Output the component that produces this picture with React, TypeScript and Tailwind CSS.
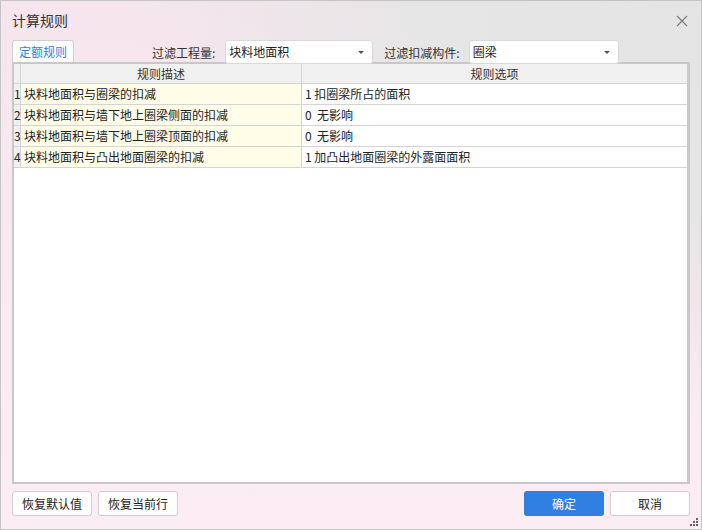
import React from 'react';

const rows = [
  { no: '1', desc: '块料地面积与圈梁的扣减', opt: '1 扣圈梁所占的面积' },
  { no: '2', desc: '块料地面积与墙下地上圈梁侧面的扣减', opt: '0  无影响' },
  { no: '3', desc: '块料地面积与墙下地上圈梁顶面的扣减', opt: '0  无影响' },
  { no: '4', desc: '块料地面积与凸出地面圈梁的扣减', opt: '1 加凸出地面圈梁的外露面面积' },
];

const Select = ({ value, width }: { value: string; width: string }) => (
  <div
    className={`relative z-10 flex h-[24px] items-center justify-between rounded-[3px] border border-[#d9d9d9] bg-white pl-[3px] pr-[8px] ${width}`}
  >
    <span>{value}</span>
    <span className="h-0 w-0 border-x-[3px] border-t-[3px] border-x-transparent border-t-[#555]" />
  </div>
);

const Button = ({ label, primary }: { label: string; primary?: boolean }) => (
  <button
    className={
      primary
        ? 'h-[25px] w-[80px] rounded-[3px] bg-[#2f80e0] text-white'
        : 'h-[25px] w-[80px] rounded-[3px] border border-[#cfcfcf] bg-white text-[#222]'
    }
  >
    {label}
  </button>
);

export default function App() {
  return (
    <div
      className="flex h-[530px] w-[702px] flex-col border border-[#c4c4c4] bg-[radial-gradient(ellipse_at_100%_0%,#e4e4e4_0%,#e6e6e6_28%,transparent_58%),radial-gradient(circle_at_92%_12%,#f6f1e2_0%,transparent_12%),linear-gradient(180deg,#f6e5ed,#fcedf4)] text-[12px] text-[#222]"
      style={{ fontFamily: '"Noto Sans CJK SC", "Noto Sans", sans-serif' }}
    >
      <div className="flex h-[39px] shrink-0 items-center justify-between pl-[11px] pr-[13px]">
        <span className="text-[14px] text-[#333]">计算规则</span>
        <svg width="12" height="12" viewBox="0 0 12 12" stroke="#7a7a7a" strokeWidth="1.1">
          <path d="M1 1 L11 11 M11 1 L1 11" />
        </svg>
      </div>

      <div className="flex h-[22px] shrink-0 items-start px-[11px]">
        <div className="flex h-[23px] w-[62px] items-center justify-center rounded-t-[3px] border border-b-0 border-[#cfcfcf] bg-white text-[#2f7fe0]">
          定额规则
        </div>
        <span className="ml-[78px] mt-[4px] text-[#333]">过滤工程量:</span>
        <div className="ml-[10px]">
          <Select value="块料地面积" width="w-[148px]" />
        </div>
        <span className="ml-[11px] mt-[4px] text-[#333]">过滤扣减构件:</span>
        <div className="ml-[9px]">
          <Select value="圈梁" width="w-[150px]" />
        </div>
      </div>

      <div className="mx-[11px] flex-1 border-2 border-r-[3px] border-[#c8c8c8] bg-white">
        <div className="grid h-[20px] grid-cols-[7px_281px_1fr] border-b border-[#d4d4d4] bg-[#f0f0f0] text-[#333]">
          <div className="border-r border-[#d4d4d4]" />
          <div className="flex items-center justify-center border-r border-[#d4d4d4]">规则描述</div>
          <div className="flex items-center justify-center">规则选项</div>
        </div>
        {rows.map((r) => (
          <div
            key={r.no}
            className="grid h-[21px] grid-cols-[7px_281px_1fr] border-b border-[#d4d4d4]"
          >
            <div className="flex items-center overflow-visible border-r border-[#d4d4d4] bg-[#f0f0f0]">
              {r.no}
            </div>
            <div className="flex items-center border-r border-[#d4d4d4] bg-[#fffce8] pl-[3px]">
              {r.desc}
            </div>
            <div className="flex items-center whitespace-pre pl-[3px]">{r.opt}</div>
          </div>
        ))}
      </div>

      <div className="relative flex h-[45px] shrink-0 items-center px-[11px] pb-[6px]">
        <div className="flex gap-[6px]">
          <Button label="恢复默认值" />
          <Button label="恢复当前行" />
        </div>
        <div className="ml-auto flex gap-[6px]">
          <Button label="确定" primary />
          <Button label="取消" />
        </div>
        <svg className="absolute bottom-[2px] right-[2px]" width="9" height="9" viewBox="0 0 9 9" fill="#666">
          <rect x="6" y="0" width="2" height="2" />
          <rect x="3" y="3" width="2" height="2" />
          <rect x="6" y="3" width="2" height="2" />
          <rect x="0" y="6" width="2" height="2" />
          <rect x="3" y="6" width="2" height="2" />
          <rect x="6" y="6" width="2" height="2" />
        </svg>
      </div>
    </div>
  );
}
